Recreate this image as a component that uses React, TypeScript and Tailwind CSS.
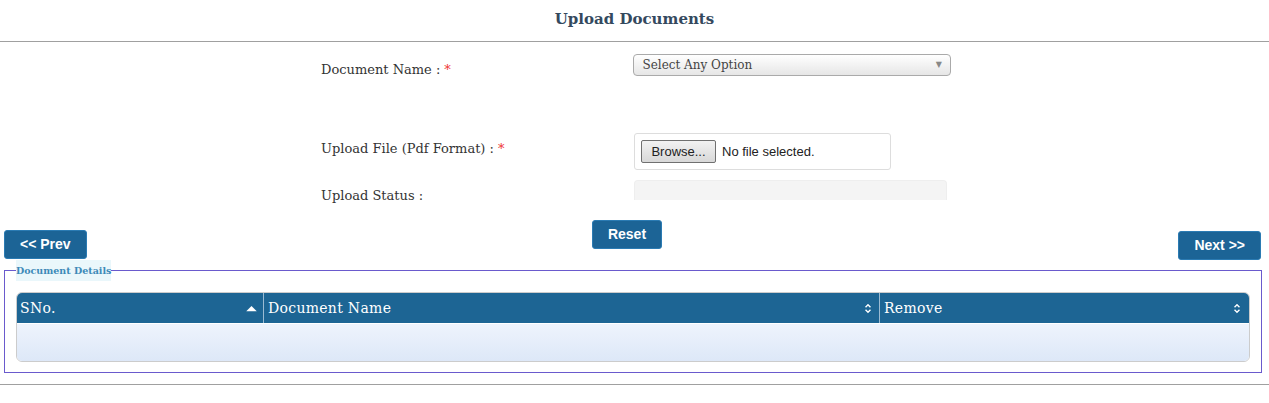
const serif = "font-['DejaVu_Serif','Liberation_Serif',serif]";
const sans = "font-['Liberation_Sans',Arial,sans-serif]";

function SortBoth() {
  return (
    <svg viewBox="0 0 8 12" className="h-[11px] w-[8px]" fill="none" stroke="white" strokeWidth="1.5">
      <path d="M1.3 4.7 4 2l2.7 2.7M1.3 7.3 4 10l2.7-2.7" />
    </svg>
  );
}

function SortUp() {
  return (
    <svg viewBox="0 0 12 8" className="h-[7px] w-[11px]" fill="white">
      <path d="M0 7 6 1l6 6z" />
    </svg>
  );
}

function BlueButton({ label }: { label: string }) {
  return (
    <button
      type="button"
      className={`h-[29px] rounded-[3px] border border-[#2b7bb3] bg-[#1c6496] px-[15px] ${sans} text-[14px] font-bold text-white`}
    >
      {label}
    </button>
  );
}

function Required() {
  return <span className="ml-[4px] text-[#e33]">*</span>;
}

export default function App() {
  return (
    <div className={`h-[403px] w-[1269px] bg-white ${serif} text-[#333]`}>
      <div className="flex h-[42px] items-center justify-center border-b border-[#a0a0a0]">
        <h1 className="mt-[-2px] text-[15px] font-bold text-[#34495e]">Upload Documents</h1>
      </div>

      <div className="ml-[316px] w-[635px] text-[13px] leading-[18px]">
        <div className="mt-[12px] flex items-start">
          <div className="w-[318px] pl-[5px] pt-[7px]">
            Document Name :<Required />
          </div>
          <div className="flex h-[22px] w-[318px] items-center justify-between rounded-[4px] border border-[#aaa] bg-gradient-to-b from-white to-[#e6e6e6] px-[8px] text-[12px] text-[#444]">
            <span>Select Any Option</span>
            <span className="text-[8px] text-[#888]">▼</span>
          </div>
        </div>

        <div className="mt-[54px] flex items-start">
          <div className="w-[318px] pl-[5px] pt-[7px]">
            Upload File (Pdf Format) :<Required />
          </div>
          <div className={`flex h-[37px] w-[257px] items-center rounded-[3px] border border-[#ddd] bg-white pl-[6px] ${sans} text-[13px] text-[#222]`}>
            <span className="flex h-[23px] w-[75px] items-center justify-center rounded-[2px] border border-[#707070] bg-gradient-to-b from-[#f2f2f2] to-[#d8d8d8]">
              Browse...
            </span>
            <span className="ml-[6px]">No file selected.</span>
          </div>
        </div>

        <div className="mt-[10px] flex items-start">
          <div className="w-[318px] pl-[5px] pt-[7px]">Upload Status :</div>
          <div className="h-[20px] w-[313px] rounded-t-[4px] border border-b-0 border-[#eee] bg-[#f4f4f4]" />
        </div>
      </div>

      <div className="mt-[15px] grid h-[40px] grid-cols-[1fr_auto_1fr] items-start px-[4px]">
        <div className="mt-[10px] justify-self-start">
          <BlueButton label="<< Prev" />
        </div>
        <div className="mr-[15px]">
          <BlueButton label="Reset" />
        </div>
        <div className="mr-[4px] mt-[11px] justify-self-end">
          <BlueButton label="Next >>" />
        </div>
      </div>

      <fieldset className="ml-[4px] mr-[7px] border border-[#6a5acd] px-[11px] pb-[10px]">
        <legend className="bg-[#eaf7fb] py-[4px] text-[9.5px] font-bold leading-[13px] text-[#3d8ab8]">
          Document Details
        </legend>
        <div className="mt-[11px] overflow-hidden rounded-[6px] border border-[#ccc]">
          <div className="grid h-[30px] grid-cols-[247px_616px_1fr] bg-[#1d6594] text-[14px] tracking-[0.3px] text-white">
            <div className="flex items-center justify-between border-r border-[#9bbbd3] pl-[3px] pr-[6px]">
              <span>SNo.</span>
              <SortUp />
            </div>
            <div className="flex items-center justify-between border-r border-[#9bbbd3] pl-[4px] pr-[7px]">
              <span>Document Name</span>
              <SortBoth />
            </div>
            <div className="flex items-center justify-between pl-[4px] pr-[8px]">
              <span>Remove</span>
              <SortBoth />
            </div>
          </div>
          <div className="h-[38px] border-t border-white bg-gradient-to-b from-[#eef3fc] to-[#dde8f8]" />
        </div>
      </fieldset>

      <div className="mt-[11px] border-b border-[#a0a0a0]" />
    </div>
  );
}
